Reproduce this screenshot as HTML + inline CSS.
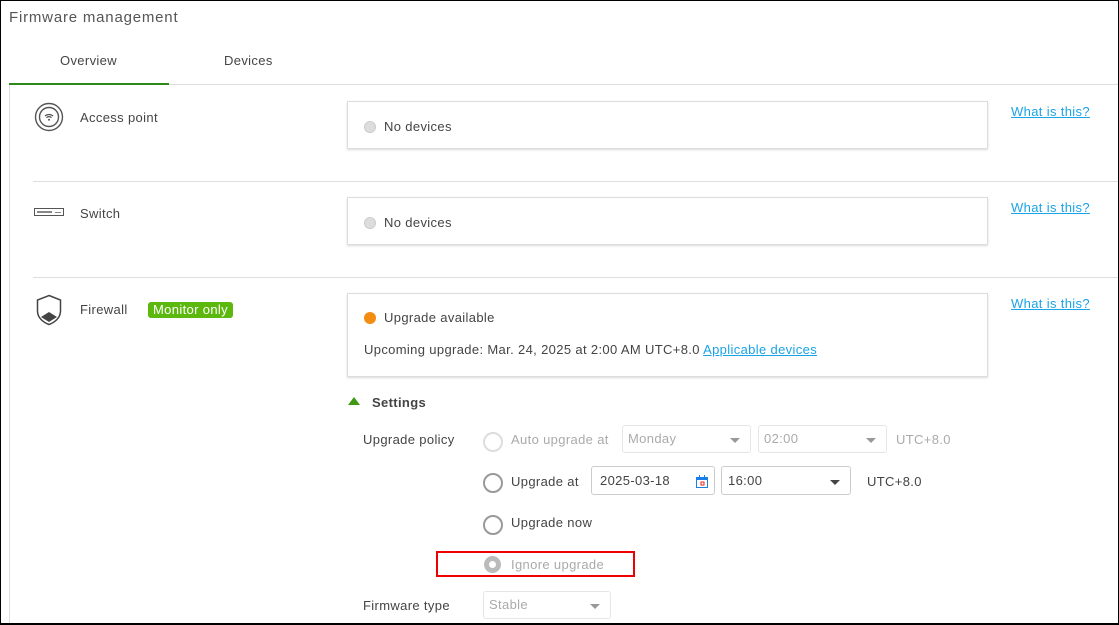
<!DOCTYPE html>
<html><head><style>
*{margin:0;padding:0;box-sizing:border-box}
body{width:1119px;height:625px;position:relative;overflow:hidden;background:#fff;font-family:"Liberation Sans",sans-serif;color:#444;font-size:13px;letter-spacing:0.35px}
.a{position:absolute;white-space:nowrap}
.frame{position:absolute;left:0;top:0;width:1119px;height:625px;border:1px solid #000;border-bottom-width:2px}
.box{position:absolute;left:347px;width:641px;border:1px solid #ddd;box-shadow:0 1px 2px rgba(0,0,0,.15);background:#fff}
.sep{position:absolute;left:33px;right:0;height:1px;background:#ddd}
.link{color:#1aa3e8;text-decoration:underline}
.dot{display:inline-block;width:12px;height:12px;border-radius:50%;vertical-align:-2px;margin-right:8px}
.radio{position:absolute;width:20px;height:20px;border-radius:50%;border:2px solid #999}
.sel{position:absolute;height:29px;border:1px solid #ccc;border-radius:3px;background:#fff;padding:6px;font-size:13px}
.sel.dis{border-color:#e6e6e6;color:#aaa;height:28px;padding:5px}
.car{position:absolute;right:10px;top:12px;width:0;height:0;border-left:5px solid transparent;border-right:5px solid transparent;border-top:5px solid #444}
.dis .car{border-top-color:#999}
</style></head><body>
<div class="a" style="left:9px;top:9px;font-size:15px;color:#555;letter-spacing:0.8px">Firmware management</div>
<div class="a" style="left:60px;top:53px;color:#444">Overview</div>
<div class="a" style="left:224px;top:53px;color:#444">Devices</div>
<div class="a" style="left:9px;top:84px;width:1110px;height:1px;background:#ddd"></div>
<div class="a" style="left:9px;top:83px;width:160px;height:2px;background:#2d8a1a"></div>
<div class="a" style="left:9px;top:85px;width:1px;height:540px;background:#ddd"></div>

<svg class="a" style="left:34px;top:102px" width="30" height="30" viewBox="0 0 30 30"><circle cx="15" cy="15" r="13.5" fill="none" stroke="#555" stroke-width="1.4"/><circle cx="15" cy="15" r="9.5" fill="none" stroke="#555" stroke-width="1.4"/><path d="M11 14a6 6 0 0 1 8 0M12.5 15.7a3.5 3.5 0 0 1 5 0" fill="none" stroke="#555" stroke-width="1.2"/><circle cx="15" cy="17.8" r="1" fill="#555"/></svg>
<div class="a" style="left:80px;top:110px">Access point</div>
<div class="box" style="top:101px;height:48px"><span class="a" style="left:16px;top:17px"><span class="dot" style="background:#ddd;border:1px solid #ccc"></span>No devices</span></div>
<div class="a link" style="left:1011px;top:104px">What is this?</div>
<div class="sep" style="top:181px"></div>

<svg class="a" style="left:34px;top:207px" width="30" height="10"><rect x="0.5" y="1.5" width="29" height="7" fill="none" stroke="#555"/><rect x="3" y="4" width="15" height="2" fill="#888"/><rect x="21" y="5" width="6" height="1" fill="#888"/></svg>
<div class="a" style="left:80px;top:206px">Switch</div>
<div class="box" style="top:197px;height:48px"><span class="a" style="left:16px;top:17px"><span class="dot" style="background:#ddd;border:1px solid #ccc"></span>No devices</span></div>
<div class="a link" style="left:1011px;top:200px">What is this?</div>
<div class="sep" style="top:277px"></div>

<svg class="a" style="left:35px;top:294px" width="28" height="32" viewBox="0 0 28 32"><path d="M14 1.5L25.5 6v11c0 7-6 11.5-11.5 13.5C8.5 28.5 2.5 24 2.5 17V6z" fill="none" stroke="#444" stroke-width="1.5"/><path d="M6 23l8-5 8 5-8 5z" fill="#444"/></svg>
<div class="a" style="left:80px;top:302px">Firewall</div>
<div class="a" style="left:148px;top:302px;background:#5cb80c;color:#fff;padding:0 5px;border-radius:3px;height:16px;line-height:16px;font-size:13px">Monitor only</div>
<div class="box" style="top:293px;height:84px">
<span class="a" style="left:16px;top:16px"><span class="dot" style="background:#f28c13"></span>Upgrade available</span>
<span class="a" style="left:16px;top:48px">Upcoming upgrade: Mar. 24, 2025 at 2:00 AM UTC+8.0 <span class="link">Applicable devices</span></span>
</div>
<div class="a link" style="left:1011px;top:296px">What is this?</div>

<div class="a" style="left:348px;top:397px;width:0;height:0;border-left:6px solid transparent;border-right:6px solid transparent;border-bottom:8px solid #3d9a10"></div>
<div class="a" style="left:372px;top:395px;font-weight:bold;color:#444">Settings</div>

<div class="a" style="left:363px;top:432px">Upgrade policy</div>
<div class="radio" style="left:483px;top:432px;border-color:#ddd"></div>
<div class="a" style="left:511px;top:432px;color:#aaa">Auto upgrade at</div>
<div class="sel dis" style="left:622px;top:425px;width:129px">Monday<span class="car"></span></div>
<div class="sel dis" style="left:758px;top:425px;width:129px">02:00<span class="car"></span></div>
<div class="a" style="left:896px;top:432px;color:#aaa">UTC+8.0</div>

<div class="radio" style="left:483px;top:473px"></div>
<div class="a" style="left:511px;top:474px">Upgrade at</div>
<div class="sel" style="left:591px;top:466px;width:124px;padding:6px 8px">2025-03-18
<svg class="a" style="right:6px;top:8px" width="12" height="13"><rect x="0.5" y="2.5" width="11" height="10" fill="none" stroke="#1a7ee8"/><rect x="0" y="2" width="12" height="3" fill="#1a7ee8"/><rect x="3" y="0" width="1" height="3" fill="#1a7ee8"/><rect x="8" y="0" width="1" height="3" fill="#1a7ee8"/><rect x="5" y="7" width="3" height="3" fill="none" stroke="#e22"/></svg></div>
<div class="sel" style="left:721px;top:466px;width:130px">16:00<span class="car" style="top:13px"></span></div>
<div class="a" style="left:867px;top:474px">UTC+8.0</div>

<div class="radio" style="left:483px;top:515px"></div>
<div class="a" style="left:511px;top:515px">Upgrade now</div>

<div class="a" style="left:436px;top:551px;width:199px;height:26px;border:2px solid #e00"></div>
<div class="a" style="left:484px;top:556px;width:17px;height:17px;border-radius:50%;background:#bbb"><div style="position:absolute;left:5px;top:5px;width:7px;height:7px;border-radius:50%;background:#fff"></div></div>
<div class="a" style="left:511px;top:557px;color:#aaa">Ignore upgrade</div>

<div class="a" style="left:363px;top:598px">Firmware type</div>
<div class="sel dis" style="left:483px;top:591px;width:128px">Stable<span class="car"></span></div>

<div class="frame"></div>
</body></html>
